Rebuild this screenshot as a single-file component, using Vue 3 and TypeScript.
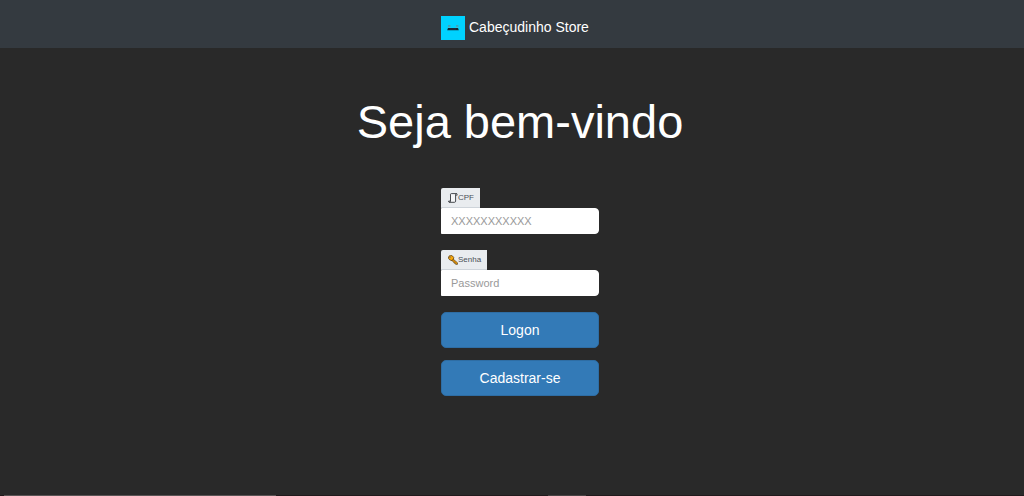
<script setup lang="ts">
import { ref } from 'vue'

const cpf = ref('')
const password = ref('')
</script>

<template>
  <div class="page">
    <header class="navbar">
      <a class="brand" href="#">
        <svg class="logo" viewBox="0 0 24 24" aria-hidden="true">
          <rect width="24" height="24" fill="#00d2ff" />
          <path d="M7 10h2.4M15 10h2.4" stroke="#5795a5" stroke-width="1.6" />
          <path d="M6.5 11.3h3M14.5 11.3h3" stroke="#3dc0da" stroke-width="1" />
          <path d="M7 12h10l.8 2.2H6.2z" fill="#10242e" />
          <path d="M9 13h6" stroke="#46304a" stroke-width=".6" />
        </svg>
        <span>Cabeçudinho Store</span>
      </a>
    </header>

    <main class="content">
      <h1>Seja bem-vindo</h1>
      <form class="login" @submit.prevent>
        <div class="field">
          <label for="cpf">
            <svg class="icon" viewBox="0 0 10 10" aria-hidden="true">
              <path d="M2.5 8V1.2Q2.6.6 3.4.6H8.6Q7.6.8 7.6 1.8V8.2Q7.5 9.3 6.5 9.3H1.2Q.5 9.2.6 8.1H2.4Q2.5 9.1 1.4 9.3" fill="#f5f6f7" stroke="#33373b" stroke-width=".9" />
              <path d="M7.7 2.2H9.2V1.3Q9.1.6 8.5.6" fill="none" stroke="#33373b" stroke-width=".7" />
            </svg>
            <span>CPF</span>
          </label>
          <input id="cpf" v-model="cpf" type="text" placeholder="XXXXXXXXXXX" />
        </div>
        <div class="field">
          <label for="password">
            <svg class="icon" viewBox="0 0 10 10" aria-hidden="true">
              <path d="M4.2 3.2 9.5 7.8 9.4 9.4 7.6 9.3 7.2 8.2 6 8.1 5.7 6.9 2.8 4.9Z" fill="#f5a30c" stroke="#3f2b0b" stroke-width=".6" />
              <ellipse cx="3.1" cy="2.9" rx="2.7" ry="2.4" transform="rotate(35 3.1 2.9)" fill="#f9a80a" stroke="#3f2b0b" stroke-width=".6" />
              <circle cx="2.1" cy="2.1" r=".6" fill="#e8edf0" stroke="#3f2b0b" stroke-width=".4" />
              <path d="M4.4 4.6 8.4 8.2" stroke="#a86606" stroke-width=".5" />
            </svg>
            <span>Senha</span>
          </label>
          <input id="password" v-model="password" type="password" placeholder="Password" />
        </div>
        <div class="actions">
          <button type="submit">Logon</button>
          <button type="button">Cadastrar-se</button>
        </div>
      </form>
    </main>

    <footer class="edge"></footer>
  </div>
</template>

<style>
body {
  margin: 0;
  background: #292929;
}
</style>

<style scoped>
.page {
  display: flex;
  flex-direction: column;
  min-height: 100vh;
  background: #292929;
  color: #fff;
  font-family: "Liberation Sans", Arial, sans-serif;
  font-size: 14px;
  line-height: 22px;
}

.navbar {
  display: flex;
  justify-content: center;
  box-sizing: border-box;
  height: 48px;
  padding: 16px 0 0 16px;
  background: #343a40;
}

.brand {
  display: flex;
  gap: 4px;
  width: 158px;
  color: #fff;
  text-decoration: none;
  white-space: nowrap;
}

.logo {
  flex: none;
  width: 24px;
  height: 24px;
}

.content {
  display: flex;
  flex: 1;
  flex-direction: column;
  align-items: center;
  padding: 44px 0 24px 16px;
}

h1 {
  margin: 0 0 36px;
  font-size: 47px;
  font-weight: 400;
  line-height: 60px;
}

.login {
  width: 158px;
}

.field {
  display: flex;
  flex-direction: column;
  align-items: flex-start;
  margin-bottom: 16px;
}

label {
  display: flex;
  align-items: center;
  box-sizing: border-box;
  height: 20px;
  padding: 0 6px 0 7px;
  border: 1px solid #ced4da;
  border-width: 0 0 1px;
  border-radius: 2px 0 0 0;
  background: #e9ecef;
  color: #495057;
  font-size: 8px;
}

.icon {
  width: 10px;
  height: 10px;
}

input {
  box-sizing: border-box;
  width: 100%;
  height: 26px;
  padding: 0 9px;
  border: 1px solid #fff;
  border-radius: 0 4px 4px 0;
  background: #fff;
  color: #495057;
  font: 11px "Liberation Sans", Arial, sans-serif;
}

input::placeholder {
  color: #999;
  opacity: 1;
}

.actions {
  display: grid;
  gap: 12px;
}

button {
  height: 36px;
  padding: 0;
  border: 1px solid #2e6da4;
  border-radius: 5px;
  background: #337ab7;
  color: #fff;
  font: 14px "Liberation Sans", Arial, sans-serif;
  cursor: pointer;
}

.edge {
  height: 1px;
  background: linear-gradient(
    to right,
    #211a1c 4px,
    #5a5455 4px 276px,
    #211a1c 276px 548px,
    #484344 548px 586px,
    #211a1c 586px
  );
}
</style>
